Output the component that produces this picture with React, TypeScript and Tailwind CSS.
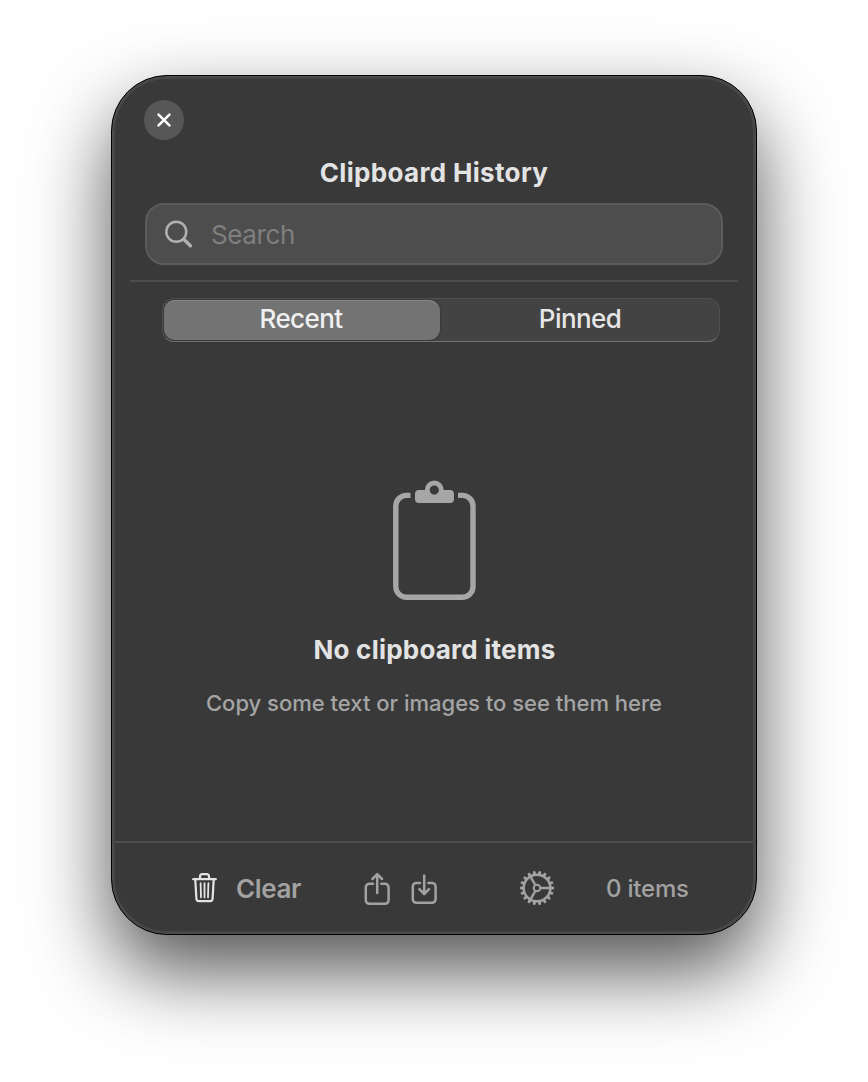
import type { ReactNode } from "react";

const TEETH = Array.from({ length: 18 }, (_, i) => i * 20);

function CloseIcon() {
  return (
    <svg width="14" height="14" viewBox="0 0 14 14" fill="none" stroke="#fff" strokeWidth="2.5" strokeLinecap="round">
      <path d="M1.6 1.6 12.4 12.4M12.4 1.6 1.6 12.4" />
    </svg>
  );
}

function SearchIcon() {
  return (
    <svg width="28" height="28" viewBox="0 0 28 28" fill="none" stroke="#b0b0b0" strokeLinecap="round">
      <circle cx="11.3" cy="11.8" r="10" strokeWidth="2.5" />
      <path d="M19 19.6 25.3 25.8" strokeWidth="3.5" />
    </svg>
  );
}

function ClipboardIcon() {
  return (
    <svg width="84" height="120" viewBox="0 0 84 120" fill="none">
      <path
        d="M18.5 15.4H14.5A10.7 10.7 0 0 0 3.8 26.1V106.6A10.7 10.7 0 0 0 14.5 117.3H70.3A10.7 10.7 0 0 0 81 106.6V26.1A10.7 10.7 0 0 0 70.3 15.4H66"
        stroke="#a6a6a6"
        strokeWidth="5.4"
      />
      <path
        fill="#a6a6a6"
        fillRule="evenodd"
        d="M27 10H32.9V9.8A9.4 9.4 0 0 1 51.7 9.8V10H58A4 4 0 0 1 62 14V19A4 4 0 0 1 58 23H27A4 4 0 0 1 23 19V14A4 4 0 0 1 27 10ZM42.3 5.5A4.6 4.6 0 1 0 42.3 14.7A4.6 4.6 0 1 0 42.3 5.5Z"
      />
    </svg>
  );
}

function TrashIcon() {
  return (
    <svg width="26" height="30" viewBox="0 0 26 30" fill="none" stroke="#e4e4e4" strokeWidth="2.2" strokeLinecap="round" strokeLinejoin="round">
      <path d="M1.2 6.2H23.8M8 5.8V3.4A2.2 2.2 0 0 1 10.2 1.2H14.8A2.2 2.2 0 0 1 17 3.4V5.8" />
      <path d="M3.3 6.5 4.4 25.6A2.6 2.6 0 0 0 7 28.2H18A2.6 2.6 0 0 0 20.6 25.6L21.7 6.5" />
      <path d="M8.6 10.2 9 24.4M12.5 10.2V24.4M16.4 10.2 16 24.4" strokeWidth="1.8" />
    </svg>
  );
}

function ExportIcon() {
  return (
    <svg width="26" height="34" viewBox="0 0 26 34" fill="none" stroke="#a2a2a2" strokeWidth="2.5" strokeLinecap="round" strokeLinejoin="round">
      <path d="M9 11.8H5.4A3.6 3.6 0 0 0 1.8 15.4V28.2A3.6 3.6 0 0 0 5.4 31.8H21A3.6 3.6 0 0 0 24.6 28.2V15.4A3.6 3.6 0 0 0 21 11.8H17.4" />
      <path d="M13.2 21V2.4M8.4 7 13.2 2.2 18 7" />
    </svg>
  );
}

function ImportIcon() {
  return (
    <svg width="26" height="32" viewBox="0 0 26 32" fill="none" stroke="#a2a2a2" strokeWidth="2.5" strokeLinecap="round" strokeLinejoin="round">
      <path d="M9 9.9H5.4A3.6 3.6 0 0 0 1.8 13.5V26.2A3.6 3.6 0 0 0 5.4 29.8H21A3.6 3.6 0 0 0 24.6 26.2V13.5A3.6 3.6 0 0 0 21 9.9H17.4" />
      <path d="M13.2 2.4V20.8M8.4 16.2 13.2 21 18 16.2" />
    </svg>
  );
}

function GearIcon() {
  return (
    <svg width="36" height="36" viewBox="-18 -18 36 36" fill="none" stroke="#a2a2a2">
      <circle r="13.3" strokeWidth="2.4" />
      <circle r="3.3" strokeWidth="2" />
      <path d="M3.8 0H13M-1.9 3.3-6.5 11.3M-1.9-3.3-6.5-11.3" strokeWidth="2.4" />
      {TEETH.map((angle) => (
        <path key={angle} d="M13.6-1.8 16.8-1.2Q17.8 0 16.8 1.2L13.6 1.8Z" fill="#a2a2a2" stroke="none" transform={`rotate(${angle})`} />
      ))}
    </svg>
  );
}

function IconButton({ label, children }: { label: string; children: ReactNode }) {
  return (
    <button type="button" aria-label={label} className="flex shrink-0">
      {children}
    </button>
  );
}

export default function App() {
  return (
    <main className="flex h-[1082px] w-[868px] justify-center overflow-hidden bg-white pt-[75px] font-['Inter',sans-serif]">
      <section className="flex h-[860px] w-[646px] flex-col rounded-[56px] border border-black bg-[#393939] shadow-[0_36px_80px_rgba(0,0,0,0.68),inset_0_0_0_1px_#4f4f4f,inset_0_0_0_3px_#464646]">
        <header className="flex flex-col px-[33px] pt-6">
          <button type="button" aria-label="Close" className="ml-[-1px] flex size-10 items-center justify-center rounded-full bg-[#575757]">
            <CloseIcon />
          </button>
          <h1 className="mt-[17px] text-center text-[26px] leading-8 font-bold tracking-[0.33px] text-[#e3e3e3]">Clipboard History</h1>
          <label className="mt-[14px] flex h-[62px] items-center rounded-[19px] border-2 border-[#5c5c5c] bg-[#4d4d4d] pl-[18px]">
            <SearchIcon />
            <span className="mt-[2px] ml-[18px] text-[26px] leading-8 tracking-[-0.4px] text-[#7f7f7f]">Search</span>
          </label>
        </header>
        <div className="mx-[18px] mt-[15px] h-[2px] shrink-0 bg-[#4d4d4d]" />
        <div className="mt-4 mr-[36px] ml-[50px] flex h-11 shrink-0 rounded-xl border border-[#505050] border-b-[#747474] bg-[#434343] p-px text-[26px] leading-8 font-medium tracking-[-0.6px] text-[#e6e6e6]">
          <button type="button" className="flex w-[276px] justify-center rounded-[11px] border-t border-[#898989] bg-[#737373] pt-[2px] pr-[2px] text-[#f0f0f0] shadow-[0_0_2px_rgba(0,0,0,0.5)]">
            Recent
          </button>
          <button type="button" className="flex flex-1 justify-center pt-[3px] pl-[2px]">Pinned</button>
        </div>
        <div className="flex flex-1 flex-col items-center pt-[138px]">
          <ClipboardIcon />
          <h2 className="mt-[34px] pl-px text-[26px] leading-8 font-bold tracking-[0.22px] text-[#e3e3e3]">No clipboard items</h2>
          <p className="mt-[23px] text-[22px] leading-7 font-medium text-[#a5a5a5]">Copy some text or images to see them here</p>
        </div>
        <footer className="mx-[3px] flex h-[93px] shrink-0 items-center border-t-2 border-[#4d4d4d] pl-[77px] text-[#a2a2a2]">
          <button type="button" className="flex shrink-0 items-center gap-[18px]">
            <div className="-mt-0.5"><TrashIcon /></div>
            <span className="w-[65px] text-[26px] leading-8 font-semibold tracking-[-0.4px] whitespace-nowrap">Clear</span>
          </button>
          <div className="ml-[63px] flex items-center gap-[21px]">
            <IconButton label="Export"><ExportIcon /></IconButton>
            <IconButton label="Import"><ImportIcon /></IconButton>
          </div>
          <div className="-mt-0.5 ml-[82px] flex"><IconButton label="Settings"><GearIcon /></IconButton></div>
          <span className="ml-[51px] text-2xl leading-8 font-medium tracking-[-0.2px] whitespace-nowrap">0 items</span>
        </footer>
      </section>
    </main>
  );
}
